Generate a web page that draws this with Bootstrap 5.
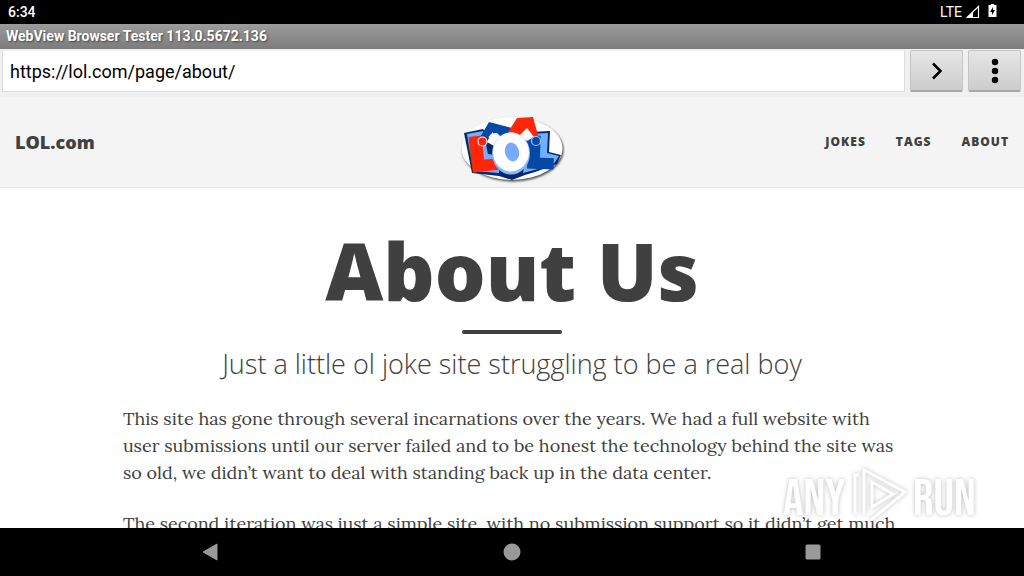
<!DOCTYPE html>
<html lang="en">
<head>
<meta charset="utf-8">
<meta name="viewport" content="width=device-width, initial-scale=1">
<title>About Us - LOL.com</title>
<link href="https://cdn.jsdelivr.net/npm/bootstrap@5.3.0/dist/css/bootstrap.min.css" rel="stylesheet">
<style>
body { font-family: Roboto, "Liberation Sans", sans-serif; color: #404040; background: #fff; }
.status-bar { height: 24px; background: #000; color: #fff; font-size: 14px; font-weight: 500; line-height: 24px; }
.status-icons { padding-right: 19px; gap: 4px; }
.title-bar { height: 25px; padding-left: 6px; background: linear-gradient(#9b9b9b, #7c7c7c); color: #fff; font-size: 14px; line-height: 24px; font-weight: 700; text-shadow: 1px 1px 2px #444; }
.url-bar { height: 48px; background: #f0f0f0; gap: 5px; padding: 1px 3px 4px 2px; }
.url-bar .form-control { font-size: 18px; color: #000; border: 1px solid #ddd; border-top-color: #eee; padding: 0 7px; height: 42px; min-width: 0; }
.tool-btn { width: 53px; height: 42px; padding: 0; background: linear-gradient(#e6e6e6, #cdcdcd); border: 1px solid #c4c4c4; border-bottom: 2px solid #a8a8a8; border-radius: 2px; display: grid; place-items: center; }
.site-nav { height: 91px; background: #f4f4f4; border-bottom: 1px solid #e6e6e6; font-family: "Open Sans", sans-serif; }
.site-nav a { color: #404040; text-decoration: none; }
.brand-link { font-size: 18px; font-weight: 800; line-height: 28px; }
.menu-link { font-size: 12px; font-weight: 800; letter-spacing: 1px; line-height: 28px; }
.site-nav .side { flex: 1 1 0; padding: 0 15px; }
.menu { gap: 30px; }
.page-title { font-family: "Open Sans", sans-serif; font-size: 80px; font-weight: 800; line-height: 88px; margin: 38px 0 0; }
.rule { width: 100px; height: 4px; border-radius: 2px; background: #404040; margin: 16px auto 12px; }
.subtitle { font-family: "Open Sans", sans-serif; font-size: 27px; font-weight: 300; line-height: 36px; margin: 0; }
.article { width: 76%; font-family: Lora, "Liberation Serif", serif; font-size: 18px; line-height: 27px; margin: 23px auto 0; }
.article p { margin-bottom: 24px; }
.system-nav { height: 48px; background: #000; }
.system-nav .keys { padding: 0 60px; }
.system-nav button { background: none; border: 0; padding: 0; width: 24px; height: 24px; line-height: 0; }
.watermark { position: absolute; right: 44px; bottom: 2px; pointer-events: none; filter: drop-shadow(0 0 2px #aaa); opacity: .8; }
</style>
</head>
<body class="vh-100 d-flex flex-column overflow-hidden">
<div class="status-bar d-flex justify-content-between flex-shrink-0 px-2">
  <span>6:34</span>
  <span class="status-icons d-flex align-items-start fw-normal"><span>LTE</span>
    <svg width="14" height="24" viewBox="0 0 14 24"><path d="M1 17.500 12.500 6.500v11z" fill="none" stroke="#fff" stroke-width="1.200"/><path d="M1 18 7 12v6z" fill="#fff"/></svg>
    <svg class="ms-1 me-n1" width="9" height="24" viewBox="0 0 9 24"><path d="M3 4h3v1h2.500v12H.500V5H3z" fill="#fff"/><path d="M5 7 2 12h2v3l3-5H5z" fill="#000"/></svg>
  </span>
</div>
<div class="title-bar flex-shrink-0">WebView Browser Tester 113.0.5672.136</div>
<form class="url-bar d-flex flex-shrink-0" onsubmit="return false">
  <input class="form-control rounded-0 flex-fill" type="text" aria-label="Address" value="https://lol.com/page/about/">
  <button class="tool-btn flex-shrink-0" type="submit" aria-label="Go"><svg width="24" height="24" viewBox="0 0 24 24"><path d="m8 4.500 7.500 7.500L8 19.500" fill="none" stroke="#000" stroke-width="2.500"/></svg></button>
  <button class="tool-btn flex-shrink-0" type="button" aria-label="Menu"><svg width="24" height="28" viewBox="0 0 24 28"><g fill="#000"><circle cx="12" cy="5" r="3.200"/><circle cx="12" cy="14" r="3.200"/><circle cx="12" cy="23" r="3.200"/></g></svg></button>
</form>
<header class="site-nav d-flex align-items-center flex-shrink-0">
  <div class="side"><a class="brand-link" href="#">LOL.com</a></div>
  <a href="#" aria-label="Home"><svg class="d-block mt-3" width="106" height="70" viewBox="0 0 106 70">
    <defs><filter id="soft"><feGaussianBlur stdDeviation="1"/></filter></defs>
    <ellipse cx="54" cy="35" rx="50.500" ry="31.500" fill="#444" filter="url(#soft)"/>
    <ellipse cx="53" cy="33.500" rx="50.500" ry="31.500" fill="#fff"/>
    <path d="M5 18 24 14 32 26 70 24 71 17 91 16 90 37 102 40 98 49 76 57 66 60 53 65 40 61 13 58z" fill="#07286a"/>
    <path d="M8 19 24 16 29 39 42 41 40 58 14 56zM70 19 89 18 88 38 100 41 94 50 64 58z" fill="#73afff"/>
    <text x="14" y="54" font-family="Liberation Sans" font-weight="700" font-size="42" fill="#ff2708" stroke="#ff2708" stroke-width="7" transform="rotate(-6 14 54)">L</text>
    <text x="69" y="50" font-family="Liberation Sans" font-weight="700" font-size="38" fill="#0648a6" stroke="#0648a6" stroke-width="7" transform="rotate(2 69 50)">L</text>
    <path d="M30 7 57 14 51 26 37 33 34 17 25 27 20 24z" fill="#0648a6"/>
    <path d="M28 27 Q32 17 38 18 L43 23 35 31z" fill="#fff"/>
    <path d="M58 3 74 2 79 20 77 23 67 15 61 22 46 22z" fill="#ff2708"/>
    <path d="M60 21 68 13 75 22 68 26z" fill="#fff"/>
    <ellipse cx="52" cy="38.500" rx="19" ry="21" fill="#87b9ff"/>
    <ellipse cx="52" cy="37" rx="18" ry="19.500" fill="#fff"/>
    <ellipse cx="53" cy="37" rx="7" ry="9.500" fill="#78abff" transform="rotate(-14 53 37)"/>
    <circle cx="23.500" cy="26.500" r="4.500" fill="#ff2708" stroke="#fff" stroke-width="1.200"/>
    <circle cx="77" cy="26" r="4.500" fill="#0648a6" stroke="#9cc8ff" stroke-width="1.200"/>
  </svg></a>
  <nav class="side menu d-flex justify-content-end"><a class="menu-link" href="#">JOKES</a><a class="menu-link" href="#">TAGS</a><a class="menu-link" href="#">ABOUT</a></nav>
</header>
<main class="flex-fill overflow-hidden position-relative" style="min-height:0">
  <div class="text-center">
    <h1 class="page-title">About Us</h1>
    <div class="rule"></div>
    <p class="subtitle">Just a little ol joke site struggling to be a real boy</p>
  </div>
  <article class="article">
    <p>This site has gone through several incarnations over the years. We had a full website with user submissions until our server failed and to be honest the technology behind the site was so old, we didn’t want to deal with standing back up in the data center.</p>
    <p>The second iteration was just a simple site, with no submission support so it didn’t get much</p>
  </article>
  <svg class="watermark" width="202" height="62" viewBox="0 0 202 62" font-family="'Bebas Neue', 'Roboto Condensed', 'Liberation Sans', sans-serif" font-size="51" fill="#fff">
    <text x="5" y="51">ANY</text>
    <text x="135" y="51">RUN</text>
    <path d="M77 50V11h4M86 51V6L127 28 93 56M94 43V18L115 30z" fill="none" stroke="#fff" stroke-width="3"/>
  </svg>
</main>
<nav class="system-nav d-flex align-items-center flex-shrink-0" aria-label="System">
  <div class="keys flex-fill d-flex justify-content-around">
    <button aria-label="Back"><svg width="24" height="24" viewBox="0 0 24 24"><path d="M4 12 18 4v16z" fill="#999" stroke="#999" stroke-linejoin="round"/></svg></button>
    <button aria-label="Home"><svg width="24" height="24" viewBox="0 0 24 24"><circle cx="12" cy="12" r="8.500" fill="#999"/></svg></button>
    <button aria-label="Recents"><svg width="24" height="24" viewBox="0 0 24 24"><rect x="4.500" y="4.500" width="15" height="15" rx="1.500" fill="#999"/></svg></button>
  </div>
</nav>
<script src="https://cdn.jsdelivr.net/npm/bootstrap@5.3.0/dist/js/bootstrap.bundle.min.js"></script>
</body>
</html>
